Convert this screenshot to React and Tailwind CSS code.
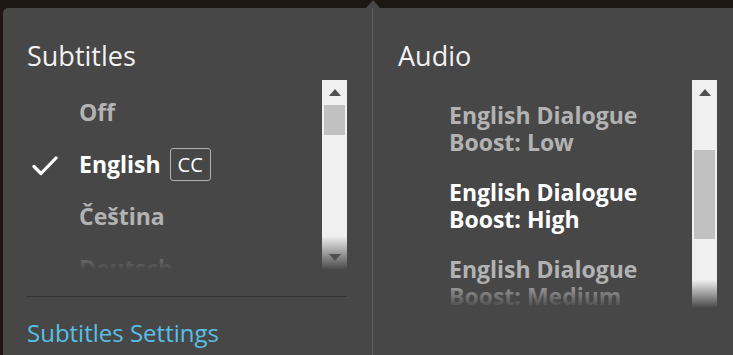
import React from "react";

const font = { fontFamily: '"Open Sans", "Noto Sans", sans-serif' };

function Check() {
  return (
    <svg width="26" height="20" viewBox="0 0 26 20" className="block">
      <path d="M2 10.5 L9 17.5 L24 2" fill="none" stroke="#ffffff" strokeWidth="3.2" strokeLinecap="round" strokeLinejoin="round" />
    </svg>
  );
}

function ScrollBar({ height, thumbTop, thumbHeight }) {
  return (
    <div className="relative w-[25px] bg-[#f0f0f0]" style={{ height }}>
      <div className="flex h-[25px] items-center justify-center">
        <svg width="12" height="7" viewBox="0 0 12 7"><path d="M6 0 L12 7 L0 7 Z" fill="#505050" /></svg>
      </div>
      <div className="absolute left-[2px] right-[2px] bg-[#c1c1c1]" style={{ top: thumbTop, height: thumbHeight }} />
    </div>
  );
}

export default function App() {
  return (
    <div className="relative h-[355px] w-[733px] overflow-hidden bg-[#1d1613]" style={font}>
      <div className="absolute left-[366px] top-0 h-0 w-0 border-x-[7px] border-b-[8px] border-x-transparent border-b-[#474747]" />
      <div className="ml-[3px] mt-[8px] flex h-[347px] rounded-tl-[5px] bg-[#474747]">
        {/* Subtitles column */}
        <div className="w-[369px] shrink-0 pl-[24px] pr-[25px]">
          <div className="pt-[30px] text-[27px] leading-[36px] text-[#f2f2f2]">Subtitles</div>
          <div className="relative mt-[6px] flex h-[190px] justify-between">
            <div className="w-[290px] overflow-hidden pt-[6px]">
              <div className="flex h-[52px] items-center pl-[52px] text-[23px] font-bold text-[#b3b3b3]">Off</div>
              <div className="relative flex h-[52px] items-center pl-[52px] text-[23px] font-bold text-white">
                <div className="absolute left-[5px] top-[18px]"><Check /></div>
                <span>English</span>
                <span className="ml-[9px] rounded-[3px] border border-[#b0b0b0] px-[7px] text-[20px] font-normal leading-[31px]">CC</span>
              </div>
              <div className="flex h-[52px] items-center pl-[52px] text-[23px] font-bold text-[#b3b3b3]">Čeština</div>
              <div className="flex h-[52px] items-center pl-[52px] text-[23px] font-bold text-[#b3b3b3]">Deutsch</div>
            </div>
            <ScrollBar height={190} thumbTop={25} thumbHeight={30} />
            <div className="pointer-events-none absolute bottom-0 left-0 right-0 h-[34px] bg-gradient-to-b from-transparent to-[#474747]" />
            <div className="pointer-events-none absolute bottom-[9px] right-[6px]">
              <svg width="12" height="7" viewBox="0 0 12 7"><path d="M0 0 L12 0 L6 7 Z" fill="#505050" /></svg>
            </div>
          </div>
          <div className="mt-[26px] h-px bg-[#333333]" />
          <div className="pt-[21px] text-[24px] leading-[30px] text-[#57c0e6]">Subtitles Settings</div>
        </div>
        <div className="w-px shrink-0 bg-[#5e5e5e]" />
        {/* Audio column */}
        <div className="flex-1 pl-[25px] pr-[16px]">
          <div className="pt-[30px] text-[27px] leading-[36px] text-[#f2f2f2]">Audio</div>
          <div className="relative mt-[6px] flex h-[228px] justify-between">
            <div className="w-[270px] overflow-hidden pt-[22px] pl-[51px] text-[23px] font-bold leading-[27px]">
              <div className="h-[77px] text-[#b3b3b3]">English Dialogue<br />Boost: Low</div>
              <div className="h-[77px] text-white">English Dialogue<br />Boost: High</div>
              <div className="h-[77px] text-[#b3b3b3]">English Dialogue<br />Boost: Medium</div>
            </div>
            <ScrollBar height={228} thumbTop={70} thumbHeight={89} />
            <div className="pointer-events-none absolute bottom-0 left-0 right-0 h-[28px] bg-gradient-to-b from-transparent to-[#474747]" />
          </div>
        </div>
      </div>
    </div>
  );
}
